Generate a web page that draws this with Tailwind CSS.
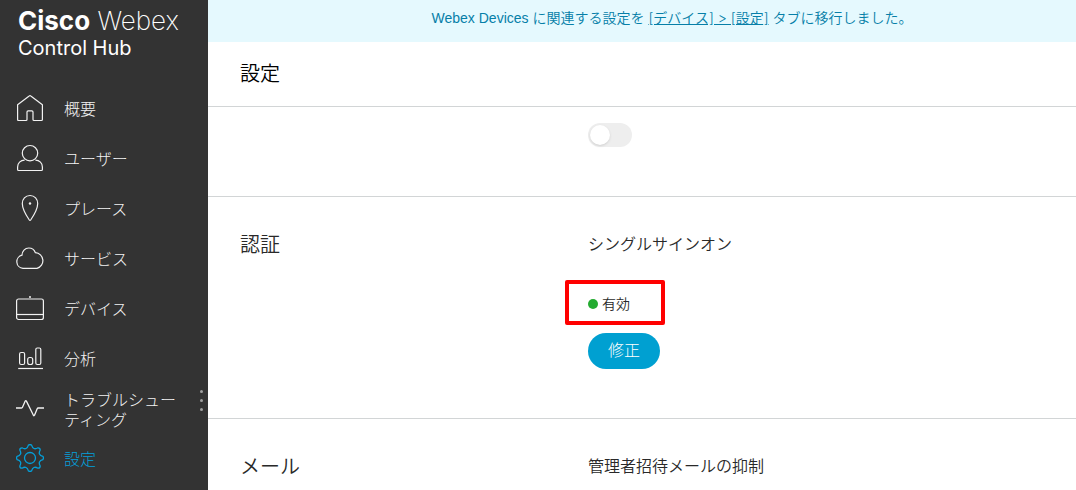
<!DOCTYPE html>
<html lang="ja">
<head>
<meta charset="utf-8">
<title>Cisco Webex Control Hub</title>
<script src="https://cdn.jsdelivr.net/npm/@tailwindcss/browser@4"></script>
</head>
<body class="flex h-screen overflow-hidden bg-white font-['Inter','Noto_Sans_CJK_JP',sans-serif] font-[350] text-[#292929]">
<aside class="relative flex w-52 shrink-0 flex-col bg-[#333333] text-[#f2f2f2]">
  <header class="h-[83px] pl-[18px] pt-[7px] text-white">
    <p class="text-[26px] leading-7"><b class="font-bold">Cisco</b> <span class="font-extralight">Webex</span></p>
    <p class="text-xl leading-[26px] font-normal">Control Hub</p>
  </header>
  <nav class="text-base leading-5 font-light">
    <a href="#" class="flex h-[50px] items-center gap-5 pl-4">
      <svg class="size-7 shrink-0" viewBox="0 0 28 28" fill="none" stroke="currentColor" stroke-width="1.2" stroke-linejoin="round"><path d="M1.6 10.8 13.2 1.9Q14 1.2 14.8 1.9L26.4 10.8V25.5Q26.4 26.5 25.4 26.5H18Q17 26.5 17 25.5V18Q17 16.8 15.8 16.8H12.2Q11 16.8 11 18V25.5Q11 26.5 10 26.5H2.6Q1.6 26.5 1.6 25.5Z"/></svg>
      <span class="pt-0.5">概要</span></a>
    <a href="#" class="flex h-[50px] items-center gap-5 pl-4">
      <svg class="size-7 shrink-0" viewBox="0 0 28 28" fill="none" stroke="currentColor" stroke-width="1.2" stroke-linejoin="round"><circle cx="14" cy="9.2" r="7.7"/><path d="M8.6 16.2C4.5 16.2 1.6 19 1.6 23V25.5Q1.6 26.5 2.6 26.5H25.4Q26.4 26.5 26.4 25.5V23C26.4 19 23.5 16.2 19.4 16.2"/></svg>
      <span class="pt-0.5">ユーザー</span></a>
    <a href="#" class="flex h-[50px] items-center gap-5 pl-4">
      <svg class="size-7 shrink-0" viewBox="0 0 28 28" fill="none" stroke="currentColor" stroke-width="1.2" stroke-linejoin="round"><path d="M14 1.5C9.3 1.5 6.3 5 6.3 9.5C6.3 15.5 10.6 22 13.3 26Q14 27 14.7 26C17.4 22 21.7 15.5 21.7 9.5C21.7 5 18.7 1.5 14 1.5Z"/><circle cx="14" cy="9.5" r="1.2" fill="currentColor" stroke="none"/></svg>
      <span class="pt-0.5">プレース</span></a>
    <a href="#" class="flex h-[50px] items-center gap-5 pl-4">
      <svg class="size-7 shrink-0" viewBox="0 0 28 28" fill="none" stroke="currentColor" stroke-width="1.2" stroke-linejoin="round"><path d="M7 24.4A6.7 6.7 0 0 1 6 11.2C6 7.2 9 4 12.8 4C16 4 18.4 6 19.4 8.7A8 8 0 0 1 21 24.4Z"/></svg>
      <span class="pt-0.5">サービス</span></a>
    <a href="#" class="flex h-[50px] items-center gap-5 pl-4">
      <svg class="size-7 shrink-0" viewBox="0 0 28 28" fill="none" stroke="currentColor" stroke-width="1.2"><rect x=".6" y="5" width="26.8" height="20.5" rx="2"/><path d="M.6 20.5H27.4"/><circle cx="14" cy="3" r="1" fill="currentColor" stroke="none"/></svg>
      <span class="pt-0.5">デバイス</span></a>
    <a href="#" class="flex h-[50px] items-center gap-5 pl-4">
      <svg class="size-7 shrink-0" viewBox="0 0 28 28" fill="none" stroke="currentColor" stroke-width="1.2"><rect x="3.6" y="8.5" width="5" height="12" rx="1.5"/><rect x="11.7" y="13.5" width="5" height="7" rx="2"/><rect x="19.8" y="4" width="5" height="16.5" rx="1.5"/><path d="M2.2 24.5H27"/></svg>
      <span class="pt-0.5">分析</span></a>
    <a href="#" class="flex h-[50px] items-center gap-5 pl-4">
      <svg class="size-7 shrink-0" viewBox="0 0 28 28" fill="none" stroke="currentColor" stroke-width="1.3" stroke-linejoin="round"><path d="M0 14H5.5Q6.2 14 6.5 13.3L9.2 7.1Q9.8 6.1 10.4 7.1L17.4 21.3Q18 22.2 18.5 21.3L21.2 14.7Q21.5 14 22.2 14H28"/></svg>
      <span class="pt-1">トラブルシュー<br>ティング</span></a>
    <a href="#" aria-current="page" class="flex h-[50px] items-center gap-5 pl-4 text-[#049fd9]">
      <svg class="size-7 shrink-0" viewBox="0 0 28 28" fill="none" stroke="currentColor" stroke-width="1.3" stroke-linejoin="round"><path d="M12.4 1.1Q14 0 15.6 1.1Q17.1 6.6 22 3.8Q24.2 3.8 24.2 6Q21.4 10.9 26.9 12.4Q28 14 26.9 15.6Q21.4 17.1 24.2 22Q24.2 24.2 22 24.2Q17.1 21.4 15.6 26.9Q14 28 12.4 26.9Q10.9 21.4 6 24.2Q3.8 24.2 3.8 22Q6.6 17.1 1.1 15.6Q0 14 1.1 12.4Q6.6 10.9 3.8 6Q3.8 3.8 6 3.8Q10.9 6.6 12.4 1.1Z"/><circle cx="14" cy="14" r="5.5"/></svg>
      <span class="pt-0.5">設定</span></a>
  </nav>
  <button type="button" aria-label="サイドバーの幅を変更" class="absolute right-1 top-[389px] flex flex-col gap-1.5 p-px">
    <span class="size-[3px] rounded-full bg-[#a0a0a0]"></span><span class="size-[3px] rounded-full bg-[#a0a0a0]"></span><span class="size-[3px] rounded-full bg-[#a0a0a0]"></span>
  </button>
</aside>
<main class="flex min-w-0 grow flex-col">
  <p class="h-[42px] shrink-0 bg-[#e5f9fe] pl-[60px] pt-2 text-center text-sm leading-5 text-[#067fa8]"><span class="font-['Liberation_Sans',sans-serif]">Webex Devices</span> に関連する設定を <a href="#" class="underline">[デバイス] &gt; [設定]</a> タブに移行しました。</p>
  <h1 class="flex h-[65px] shrink-0 items-center border-b border-[#d2d5d6] px-8 text-xl text-black">設定</h1>
  <section class="flex h-[90px] shrink-0 border-b border-[#d2d5d6] pl-[380px] pt-4">
    <label class="relative h-6 w-11">
      <input type="checkbox" role="switch" aria-label="設定の切り替え" class="peer block size-full appearance-none rounded-full bg-[#eeeeee] checked:bg-[#049fd9]">
      <span class="absolute left-0.5 top-0.5 size-5 rounded-full bg-white shadow-sm peer-checked:left-5.5"></span>
    </label>
  </section>
  <section class="flex h-[222px] shrink-0 border-b border-[#d2d5d6] px-8 pt-8">
    <h2 class="w-[348px] shrink-0 text-xl leading-8">認証</h2>
    <div class="flex flex-col items-start">
      <h3 class="text-base leading-[30px]">シングルサインオン</h3>
      <p class="-ml-[23px] mt-[21px] flex h-[45px] w-25 items-center gap-1 rounded-xs border-4 border-[#ff0000] pl-[19px] pt-0.5 text-sm"><span class="size-2.5 rounded-full bg-[#24ab31]"></span>有効</p>
      <button type="button" class="mt-2 h-9 rounded-full bg-[#00a0d1] px-5 pb-0.5 text-base font-light text-white">修正</button>
    </div>
  </section>
  <section class="flex shrink-0 px-8 pt-8">
    <h2 class="w-[348px] shrink-0 text-xl leading-8">メール</h2>
    <h3 class="text-base leading-[30px]">管理者招待メールの抑制</h3>
  </section>
</main>
</body>
</html>
